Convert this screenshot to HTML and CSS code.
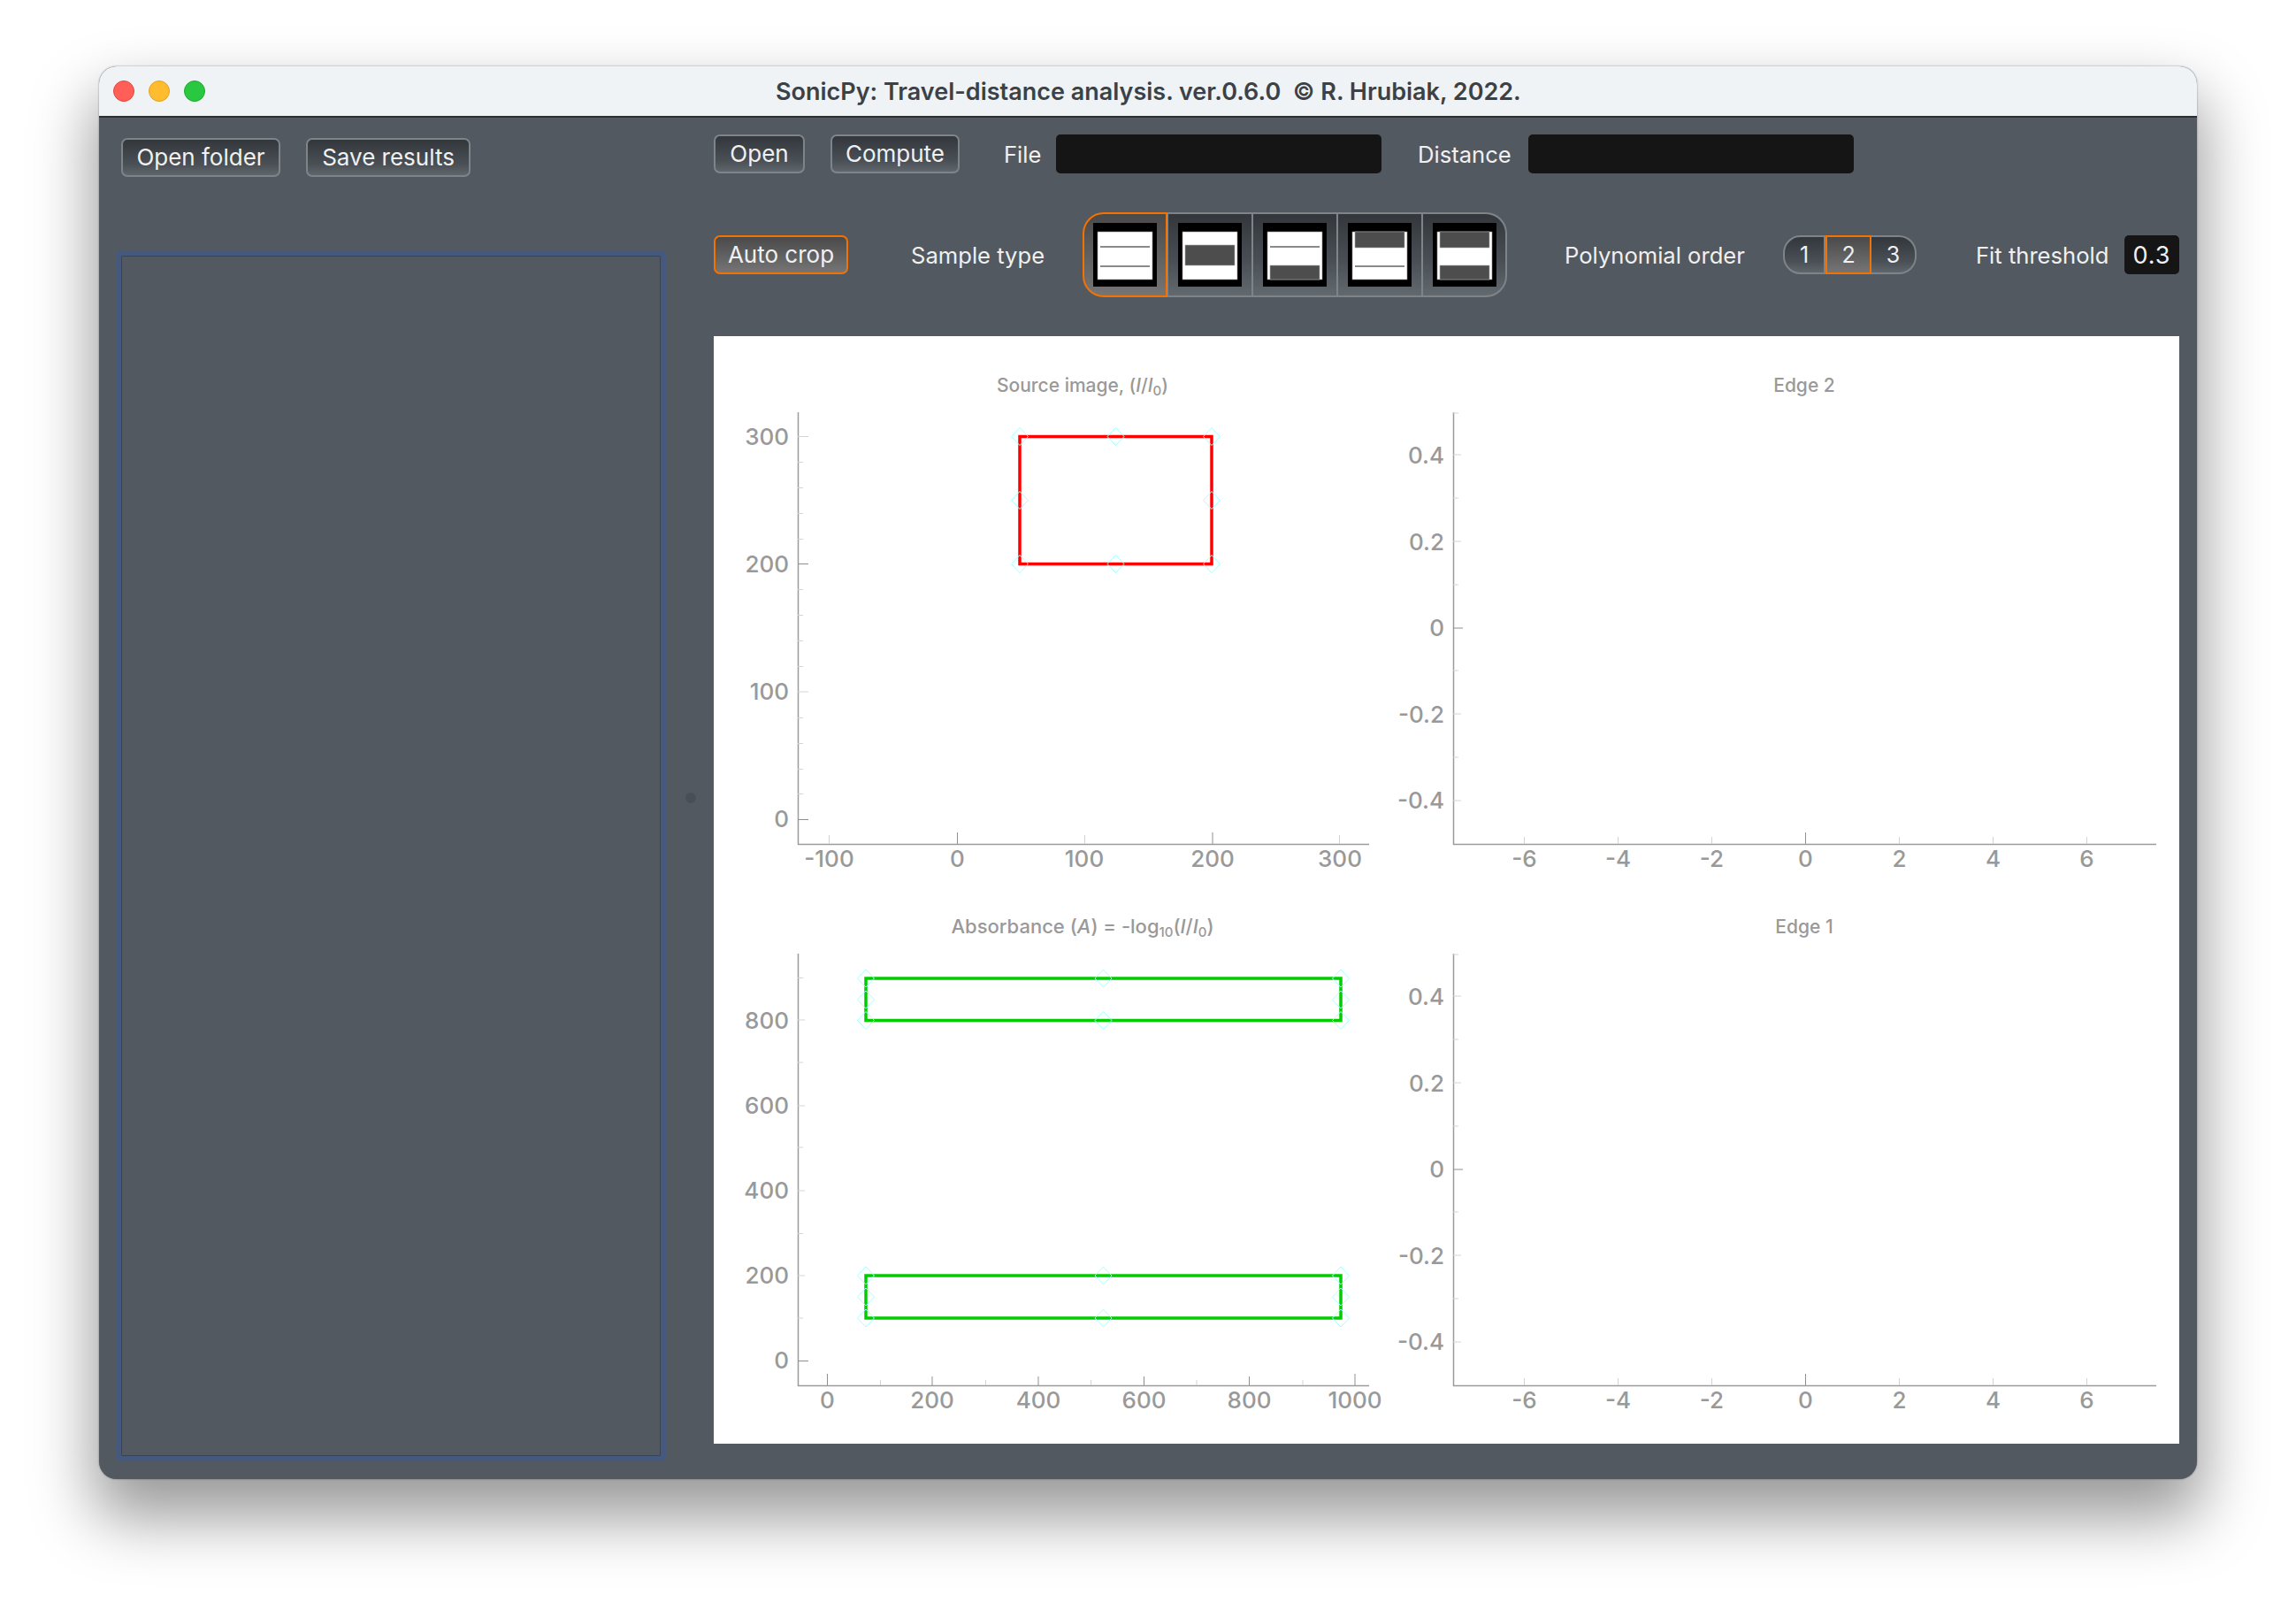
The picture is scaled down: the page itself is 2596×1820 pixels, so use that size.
FILE: index.html
```html
<!DOCTYPE html>
<html lang="en">
<head>
<meta charset="UTF-8">
<meta name="viewport" content="width=device-width, initial-scale=1.0">
<title>SonicPy: Travel-distance analysis</title>
<link rel="stylesheet" href="styles.css">
</head>
<body>

<svg class="defs" width="0" height="0">
    <defs>
        <path id="d" d="M0 -10L9.5 0L0 10L-9.5 0Z" class="diamond"/>
    </defs>
</svg>

<div class="window">
    <div class="titlebar">
        <div class="lights">
            <span class="light red"></span>
            <span class="light yellow"></span>
            <span class="light green"></span>
        </div>
        <div class="title">SonicPy: Travel-distance analysis. ver.0.6.0 &nbsp;© R. Hrubiak, 2022.</div>
    </div>

    <div class="main">
        <div class="left">
            <div class="left-buttons">
                <button class="btn btn-folder">Open folder</button>
                <button class="btn btn-save">Save results</button>
            </div>
            <div class="file-list"></div>
        </div>

        <div class="splitter"><span class="handle"></span></div>

        <div class="right">
            <div class="row-top">
                <button class="btn btn-open">Open</button>
                <button class="btn btn-compute">Compute</button>
                <span class="label label-file">File</span>
                <div class="field field-file"></div>
                <span class="label label-distance">Distance</span>
                <div class="field field-distance"></div>
            </div>

            <div class="row-options">
                <button class="btn active btn-crop">Auto crop</button>
                <span class="label label-sample">Sample type</span>
                <div class="samples">
                    <div class="sample active">
                        <svg viewBox="0 0 72 72" width="72" height="72">
                            <rect width="72" height="72"/>
                            <rect class="s-white" x="5" y="10" width="62" height="54"/>
                            <rect class="s-line" x="8" y="26" width="56" height="2"/>
                            <rect class="s-line" x="8" y="48" width="56" height="2"/>
                        </svg>
                    </div>
                    <div class="sample">
                        <svg viewBox="0 0 72 72" width="72" height="72">
                            <rect width="72" height="72"/>
                            <rect class="s-white" x="5" y="10" width="62" height="54"/>
                            <rect class="s-dark" x="8" y="25" width="56" height="23"/>
                        </svg>
                    </div>
                    <div class="sample">
                        <svg viewBox="0 0 72 72" width="72" height="72">
                            <rect width="72" height="72"/>
                            <rect class="s-white" x="5" y="10" width="62" height="54"/>
                            <rect class="s-line" x="8" y="26" width="56" height="2"/>
                            <rect class="s-dark" x="8" y="48" width="56" height="16"/>
                        </svg>
                    </div>
                    <div class="sample">
                        <svg viewBox="0 0 72 72" width="72" height="72">
                            <rect width="72" height="72"/>
                            <rect class="s-white" x="5" y="10" width="62" height="54"/>
                            <rect class="s-dark" x="8" y="10" width="56" height="18"/>
                            <rect class="s-line" x="8" y="48" width="56" height="2"/>
                        </svg>
                    </div>
                    <div class="sample">
                        <svg viewBox="0 0 72 72" width="72" height="72">
                            <rect width="72" height="72"/>
                            <rect class="s-white" x="5" y="10" width="62" height="54"/>
                            <rect class="s-dark" x="8" y="10" width="56" height="18"/>
                            <rect class="s-dark" x="8" y="48" width="56" height="16"/>
                        </svg>
                    </div>
                </div>
                <span class="label label-poly">Polynomial order</span>
                <div class="orders">
                    <div class="order">1</div>
                    <div class="order active">2</div>
                    <div class="order">3</div>
                </div>
                <span class="label label-fit">Fit threshold</span>
                <div class="field field-fit">0.3</div>
            </div>

            <div class="plots">
                <!-- viewBoxes use window coordinates so the four plots share one set of numbers -->
                <svg class="plot" viewBox="807 380 763 612">
                    <text class="plot-title" x="1224" y="443">Source image, (<tspan class="i">I</tspan>/<tspan class="i">I</tspan><tspan class="sub" dy="4">0</tspan><tspan dy="-4">)</tspan></text>
                    <path class="axis" d="M902.5 466V954.5H1548"/>
                    <path class="tick" d="M902 522.5h6M902 551.5h6M902 580.5h6M902 609.5h6M902 666.5h6M902 695.5h6M902 724.5h6M902 753.5h6M902 811.5h6M902 840.5h6M902 869.5h6M902 897.5h6"/>
                    <path class="tick" d="M902 493.5h12M902 782h12M937.5 954v-10M1226.5 954v-10M1514.5 954v-10"/>
                    <path class="tick-dark" d="M902 637.5h12M902 926.5h12M1082.5 954v-13M1371 954v-13"/>
                    <text class="ylab" x="892" y="503">300</text>
                    <text class="ylab" x="892" y="647">200</text>
                    <text class="ylab" x="892" y="791">100</text>
                    <text class="ylab" x="892" y="935">0</text>
                    <text class="xlab" x="937.5" y="980">-100</text>
                    <text class="xlab" x="1082.5" y="980">0</text>
                    <text class="xlab" x="1226" y="980">100</text>
                    <text class="xlab" x="1371" y="980">200</text>
                    <text class="xlab" x="1515" y="980">300</text>
                    <rect class="box-red" x="1153" y="493.5" width="217" height="144"/>
                    <use href="#d" x="1153" y="493.5"/><use href="#d" x="1261.5" y="493.5"/><use href="#d" x="1370" y="493.5"/>
                    <use href="#d" x="1153" y="565.5"/><use href="#d" x="1370" y="565.5"/>
                    <use href="#d" x="1153" y="637.5"/><use href="#d" x="1261.5" y="637.5"/><use href="#d" x="1370" y="637.5"/>
                </svg>

                <svg class="plot" viewBox="1570 380 894 612">
                    <text class="plot-title" x="2040" y="443">Edge 2</text>
                    <path class="axis" d="M1643.5 466V954.5H2438"/>
                    <path class="tick" d="M1643 467h6M1643 563h6M1643 661h6M1643 758h6M1643 856h6"/>
                    <path class="tick" d="M1643 514h9M1643 612h9M1643 807h9M1643 905h9M1723.5 954v-8M1829.5 954v-8M1935.5 954v-8M2147.5 954v-8M2253.5 954v-8M2359.5 954v-8"/>
                    <path class="tick-dark" d="M1643 710h11M2041.5 954v-13"/>
                    <text class="ylab" x="1633" y="524">0.4</text>
                    <text class="ylab" x="1633" y="622">0.2</text>
                    <text class="ylab" x="1633" y="719">0</text>
                    <text class="ylab" x="1633" y="817">-0.2</text>
                    <text class="ylab" x="1633" y="914">-0.4</text>
                    <text class="xlab" x="1723.5" y="980">-6</text>
                    <text class="xlab" x="1829.5" y="980">-4</text>
                    <text class="xlab" x="1935.5" y="980">-2</text>
                    <text class="xlab" x="2041.5" y="980">0</text>
                    <text class="xlab" x="2147.5" y="980">2</text>
                    <text class="xlab" x="2253.5" y="980">4</text>
                    <text class="xlab" x="2359.5" y="980">6</text>
                </svg>

                <svg class="plot" viewBox="807 992 763 640">
                    <text class="plot-title plot-title-wide" x="1224" y="1055">Absorbance (<tspan class="i">A</tspan>) = -log<tspan class="sub" dy="4">10</tspan><tspan dy="-4">(</tspan><tspan class="i">I</tspan>/<tspan class="i">I</tspan><tspan class="sub" dy="4">0</tspan><tspan dy="-4">)</tspan></text>
                    <path class="axis" d="M902.5 1078V1566.5H1548"/>
                    <path class="tick" d="M902 1105.5h6M902 1201h6M902 1297h6M902 1394.5h6M902 1490h6M995.5 1566v-6M1114.5 1566v-6M1233.5 1566v-6M1353 1566v-6M1473 1566v-6"/>
                    <path class="tick" d="M902 1153h8M902 1250h8M902 1346h8M902 1442h8"/>
                    <path class="tick-dark" d="M902 1538.5h12M935.5 1566v-13M1054 1566v-10M1174 1566v-10M1293.5 1566v-10M1412.5 1566v-10M1532 1566v-13"/>
                    <text class="ylab" x="892" y="1163">800</text>
                    <text class="ylab" x="892" y="1259">600</text>
                    <text class="ylab" x="892" y="1355">400</text>
                    <text class="ylab" x="892" y="1451">200</text>
                    <text class="ylab" x="892" y="1547">0</text>
                    <text class="xlab" x="935.5" y="1592">0</text>
                    <text class="xlab" x="1054" y="1592">200</text>
                    <text class="xlab" x="1174" y="1592">400</text>
                    <text class="xlab" x="1293.5" y="1592">600</text>
                    <text class="xlab" x="1412.5" y="1592">800</text>
                    <text class="xlab" x="1532" y="1592">1000</text>
                    <rect class="box-green" x="979" y="1106" width="537" height="47.5"/>
                    <rect class="box-green" x="979" y="1442" width="537" height="48"/>
                    <use href="#d" x="979" y="1106"/><use href="#d" x="1247.5" y="1106"/><use href="#d" x="1516" y="1106"/>
                    <use href="#d" x="979" y="1130"/><use href="#d" x="1516" y="1130"/>
                    <use href="#d" x="979" y="1153.5"/><use href="#d" x="1247.5" y="1153.5"/><use href="#d" x="1516" y="1153.5"/>
                    <use href="#d" x="979" y="1442"/><use href="#d" x="1247.5" y="1442"/><use href="#d" x="1516" y="1442"/>
                    <use href="#d" x="979" y="1466"/><use href="#d" x="1516" y="1466"/>
                    <use href="#d" x="979" y="1490"/><use href="#d" x="1247.5" y="1490"/><use href="#d" x="1516" y="1490"/>
                </svg>

                <svg class="plot" viewBox="1570 992 894 640">
                    <text class="plot-title" x="2040" y="1055">Edge 1</text>
                    <path class="axis" d="M1643.5 1078V1566.5H2438"/>
                    <path class="tick" d="M1643 1079h6M1643 1175h6M1643 1273h6M1643 1370h6M1643 1468h6"/>
                    <path class="tick" d="M1643 1126h9M1643 1224h9M1643 1419h9M1643 1517h9M1723.5 1566v-8M1829.5 1566v-8M1935.5 1566v-8M2147.5 1566v-8M2253.5 1566v-8M2359.5 1566v-8"/>
                    <path class="tick-dark" d="M1643 1322h11M2041.5 1566v-13"/>
                    <text class="ylab" x="1633" y="1136">0.4</text>
                    <text class="ylab" x="1633" y="1234">0.2</text>
                    <text class="ylab" x="1633" y="1331">0</text>
                    <text class="ylab" x="1633" y="1429">-0.2</text>
                    <text class="ylab" x="1633" y="1526">-0.4</text>
                    <text class="xlab" x="1723.5" y="1592">-6</text>
                    <text class="xlab" x="1829.5" y="1592">-4</text>
                    <text class="xlab" x="1935.5" y="1592">-2</text>
                    <text class="xlab" x="2041.5" y="1592">0</text>
                    <text class="xlab" x="2147.5" y="1592">2</text>
                    <text class="xlab" x="2253.5" y="1592">4</text>
                    <text class="xlab" x="2359.5" y="1592">6</text>
                </svg>
            </div>
        </div>
    </div>
</div>

</body>
</html>
```

FILE: styles.css
```css
body {
    margin: 0;
    height: 1820px;
    padding: 75px 112px 0;
    box-sizing: border-box;
    background-color: #fff;
    font-family: Inter, "Liberation Sans", sans-serif;
    overflow: hidden;
}
.defs {
    display: block;
    height: 0;
}
.diamond {
    fill: none;
    stroke: #a5ffff;
    stroke-width: 1;
}
.window {
    width: 2372px;
    height: 1597px;
    border-radius: 20px;
    background-color: #535960;
    box-shadow: 0 38px 70px 6px rgba(0, 0, 0, 0.4), 0 0 2px rgba(0, 0, 0, 0.45);
    display: flex;
    flex-direction: column;
    overflow: hidden;
}
.titlebar {
    height: 58px;
    flex: none;
    box-sizing: border-box;
    background-color: #eff3f6;
    border-bottom: 2px solid #2b2f33;
    display: flex;
    align-items: center;
    padding-left: 16px;
}
.lights {
    display: flex;
    gap: 16px;
    width: 764px;
}
.light {
    width: 24px;
    height: 24px;
    border-radius: 50%;
    box-sizing: border-box;
}
.red {
    background-color: #ff5f57;
    border: 1px solid #e2463f;
}
.yellow {
    background-color: #febc2e;
    border: 1px solid #e1a024;
}
.green {
    background-color: #28c840;
    border: 1px solid #1aab29;
}
.title {
    font-size: 27px;
    font-weight: 600;
    color: #3c4146;
    white-space: nowrap;
    margin-left: -15px;
}

.main {
    flex: 1;
    display: flex;
    min-height: 0;
}
.left {
    width: 642px;
    flex: none;
    box-sizing: border-box;
    padding: 23px 0 0 19px;
}
.left-buttons {
    display: flex;
    gap: 29px;
    padding-left: 6px;
    height: 126px;
}
.file-list {
    width: 610px;
    height: 1357px;
    box-sizing: border-box;
    border: 1px solid #3b4250;
    outline: 6px solid #45597f;
    outline-offset: 0;
    margin-left: 6px;
    margin-top: 7px;
    border-radius: 1px;
}
.splitter {
    width: 53px;
    flex: none;
    display: flex;
    justify-content: center;
    padding-top: 763px;
    box-sizing: border-box;
}
.handle {
    width: 12px;
    height: 12px;
    border-radius: 50%;
    background-color: #494f55;
}
.right {
    width: 1657px;
    flex: none;
    padding-top: 19px;
}

.btn {
    height: 44px;
    padding: 0;
    box-sizing: border-box;
    border: 2px solid #7d848a;
    border-radius: 7px;
    background: linear-gradient(#33373c, #4a5056 70%, #5f666c);
    color: #f0f0f0;
    font-family: inherit;
    font-size: 26px;
    line-height: 38px;
}
.btn.active {
    border-color: #f57200;
    background: linear-gradient(#4a4a4a, #757575);
}
.btn-folder { width: 180px; }
.btn-save { width: 186px; }
.btn-open { width: 103px; }
.btn-compute { width: 146px; }
.btn-crop { width: 152px; }

.label {
    font-size: 25.6px;
    color: #f0f0f0;
    white-space: nowrap;
}
.field {
    height: 44px;
    background-color: #151515;
    border-radius: 5px;
    color: #f0f0f0;
}
.row-top {
    display: flex;
    align-items: center;
    height: 44px;
}
.btn-compute { margin-left: 29px; }
.label-file { margin-left: 50px; width: 59px; }
.field-file { width: 368px; }
.label-distance { margin-left: 41px; width: 125px; }
.field-distance { width: 368px; }

.row-options {
    display: flex;
    align-items: center;
    height: 96px;
    margin-top: 44px;
}
.label-sample { margin-left: 71px; width: 194px; }
.samples {
    display: flex;
    width: 480px;
    height: 96px;
    box-sizing: border-box;
}
.sample {
    width: 96px;
    height: 96px;
    box-sizing: border-box;
    display: flex;
    align-items: center;
    justify-content: center;
    border: 2px solid #7d848a;
    border-left-width: 1px;
    border-right-width: 1px;
    background: linear-gradient(#33373c, #4a5056 60%, #62696f);
}
.sample:first-child {
    border-radius: 24px 0 0 24px;
    border: 2px solid #f57200;
    background: linear-gradient(#4a4a4a, #757575);
}
.sample:last-child {
    border-radius: 0 24px 24px 0;
    border-right-width: 2px;
}
.sample svg {
    display: block;
}
.s-white { fill: #fff; stroke: #8a8a8a; stroke-width: 0.6; }
.s-line { fill: #8a8a8a; }
.s-dark { fill: #4d4d4d; stroke: #a8a8a8; stroke-width: 0.6; }

.label-poly { margin-left: 65px; width: 247px; }
.orders {
    display: flex;
    width: 151px;
    height: 44px;
}
.order {
    flex: 1;
    box-sizing: border-box;
    display: flex;
    align-items: center;
    justify-content: center;
    border: 2px solid #7d848a;
    border-left: none;
    background: linear-gradient(#33373c, #4a5056 70%, #5f666c);
    color: #f0f0f0;
    font-size: 25px;
}
.order:first-child {
    flex: none;
    width: 48px;
    border-left: 2px solid #7d848a;
    border-radius: 20px 0 0 20px;
}
.order:last-child {
    border-radius: 0 20px 20px 0;
}
.order.active {
    flex: none;
    width: 52px;
    border: 2px solid #f57200;
    background: linear-gradient(#4a4a4a, #757575);
}
.label-fit { margin-left: 67px; width: 168px; }
.field-fit {
    width: 62px;
    font-size: 27px;
    letter-spacing: 1px;
    display: flex;
    align-items: center;
    justify-content: center;
}

.plots {
    margin-top: 44px;
    width: 1657px;
    height: 1252px;
    background-color: #fff;
    display: grid;
    grid-template-columns: 763px 894px;
    grid-template-rows: 612px 640px;
}
.plot {
    display: block;
    width: 100%;
    height: 100%;
}
.plot-title {
    font-size: 21px;
    font-weight: 500;
    fill: #999;
    text-anchor: middle;
}
.plot-title-wide {
    font-size: 22px;
}
.i { font-style: italic; }
.sub { font-size: 15px; }
.axis {
    fill: none;
    stroke: #9b9b9b;
    stroke-width: 1.5;
}
.tick {
    fill: none;
    stroke: #d4d4d4;
    stroke-width: 1;
}
.tick-dark {
    fill: none;
    stroke: #8f8f8f;
    stroke-width: 1;
}
.ylab, .xlab {
    font-size: 26px;
    font-weight: 500;
    fill: #999;
}
.ylab { text-anchor: end; }
.xlab { text-anchor: middle; }
.box-red, .box-green {
    fill: none;
    stroke-width: 3.5;
}
.box-red { stroke: #ff0000; }
.box-green { stroke: #00cc00; }
```
